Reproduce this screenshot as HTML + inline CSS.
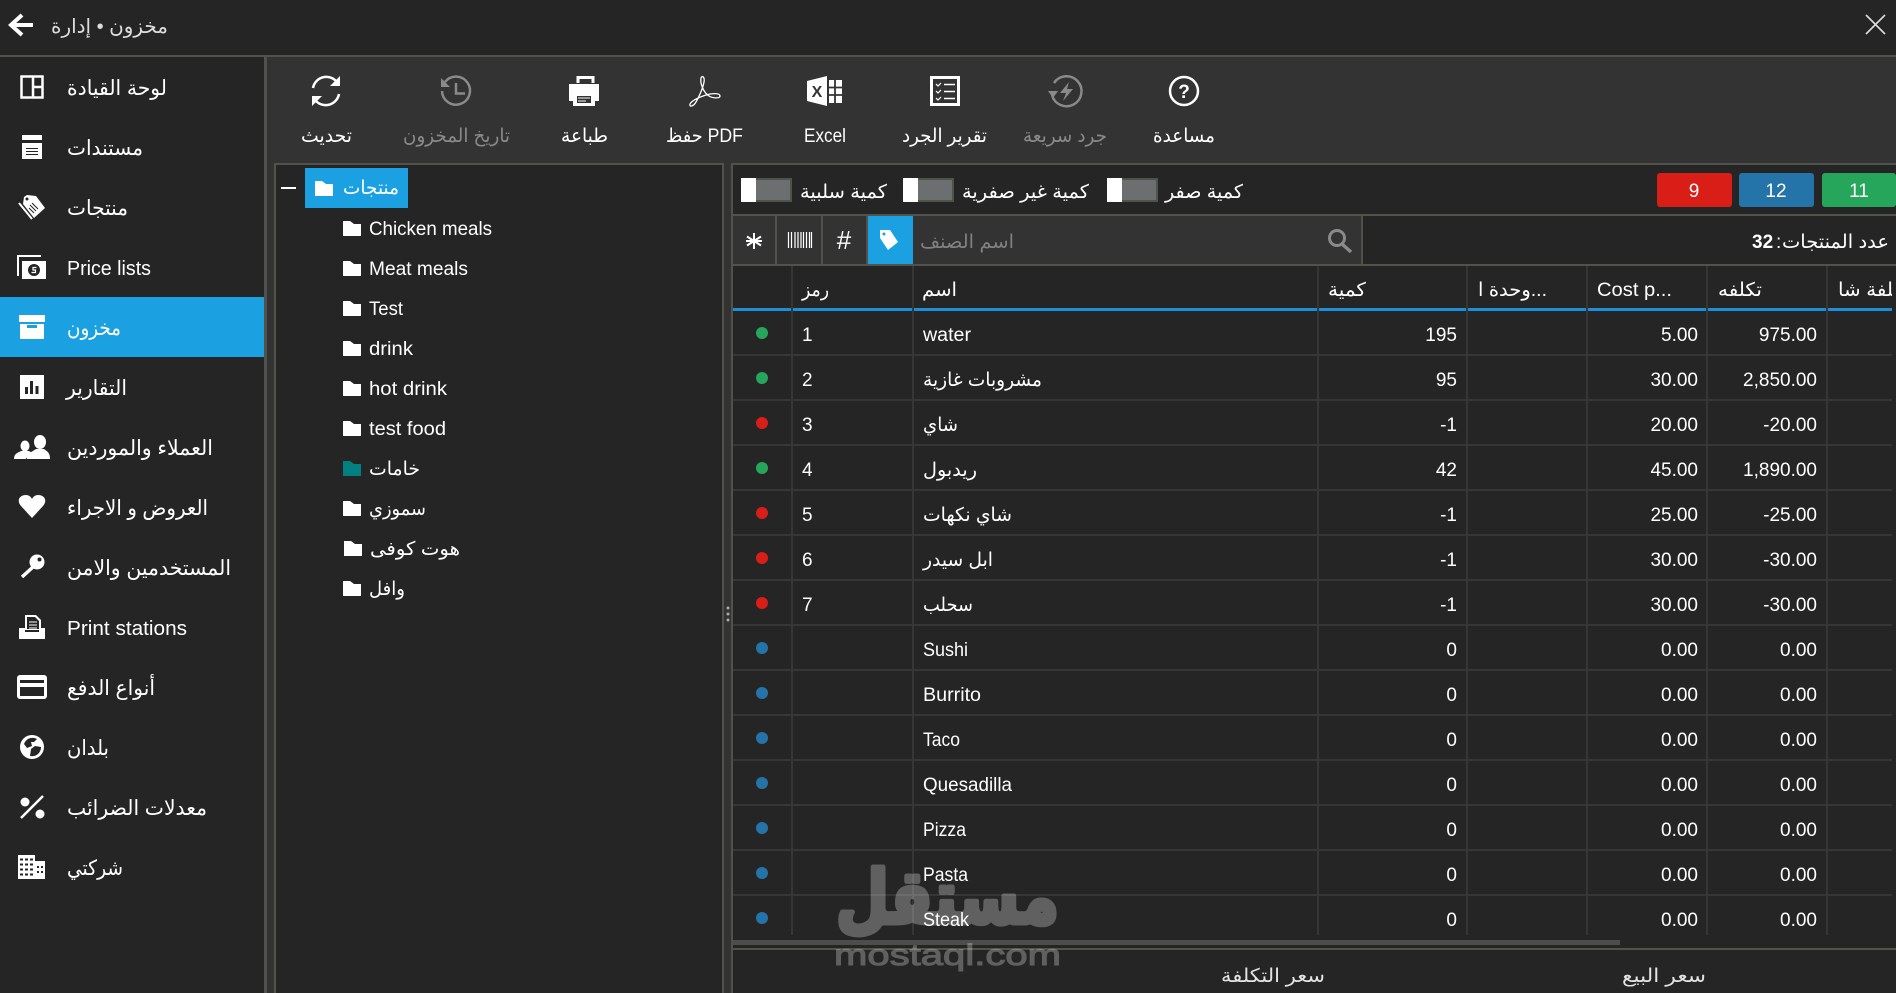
<!DOCTYPE html>
<html lang="ar"><head><meta charset="utf-8"><title>مخزون</title>
<style>
html,body{margin:0;padding:0;background:#252525;overflow:hidden}
svg{display:block}
text{font-family:"Liberation Sans","DejaVu Sans",sans-serif;font-size:19px;fill:#fff;direction:ltr;unicode-bidi:normal}
.s{font-size:21px}
.g{fill:#8a8a8a}
.e{text-anchor:end}
.m{text-anchor:middle}
</style></head><body>
<svg width="1896" height="993" viewBox="0 0 1896 993" xmlns="http://www.w3.org/2000/svg">
<defs><clipPath id="lc"><rect x="1829" y="270" width="63" height="36"/></clipPath></defs>
<rect width="1896" height="993" fill="#252525"/>
<!-- main backgrounds -->
<rect x="267" y="57" width="1629" height="936" fill="#333"/>
<rect x="733" y="165" width="1163" height="828" fill="#252525"/>
<rect x="276" y="165" width="446" height="828" fill="#252525"/>
<rect y="55" width="1896" height="2" fill="#50534c"/>
<rect x="264" y="57" width="3" height="936" fill="#50534c"/>
<rect x="274" y="163" width="450" height="2" fill="#50534c"/>
<rect x="274" y="163" width="2" height="830" fill="#50534c"/>
<rect x="722" y="163" width="2" height="830" fill="#50534c"/>
<rect x="731" y="163" width="1165" height="2" fill="#50534c"/>
<rect x="731" y="163" width="2" height="830" fill="#50534c"/>
<!-- title bar -->
<path d="M33 25H12M22 15L11 25L22 35" fill="none" stroke="#fff" stroke-width="4"/>
<text x="51" y="33" textLength="117" lengthAdjust="spacingAndGlyphs" style="fill:#ddd;font-size:20px">مخزون • إدارة</text>
<path d="M1866 15L1885 34M1885 15L1866 34" stroke="#ddd" stroke-width="1.6"/>
<!-- sidebar -->
<rect y="297" width="264" height="60" fill="#1ba1e2"/>
<text class="s" x="67" y="95" textLength="100" lengthAdjust="spacingAndGlyphs">لوحة القيادة</text>
<text class="s" x="67" y="155" textLength="76" lengthAdjust="spacingAndGlyphs">مستندات</text>
<text class="s" x="67" y="215" textLength="61" lengthAdjust="spacingAndGlyphs">منتجات</text>
<text x="67" y="275" textLength="84" lengthAdjust="spacingAndGlyphs" style="font-size:20px">Price lists</text>
<text class="s" x="67" y="335" textLength="54" lengthAdjust="spacingAndGlyphs">مخزون</text>
<text class="s" x="66" y="395" textLength="61" lengthAdjust="spacingAndGlyphs">التقارير</text>
<text class="s" x="67" y="455" textLength="146" lengthAdjust="spacingAndGlyphs">العملاء والموردين</text>
<text class="s" x="67" y="515" textLength="141" lengthAdjust="spacingAndGlyphs">العروض و الاجراء</text>
<text class="s" x="67" y="575" textLength="164" lengthAdjust="spacingAndGlyphs">المستخدمين والامن</text>
<text x="67" y="635" textLength="120" lengthAdjust="spacingAndGlyphs" style="font-size:20px">Print stations</text>
<text class="s" x="67" y="695" textLength="88" lengthAdjust="spacingAndGlyphs">أنواع الدفع</text>
<text class="s" x="67" y="755" textLength="42" lengthAdjust="spacingAndGlyphs">بلدان</text>
<text class="s" x="67" y="815" textLength="140" lengthAdjust="spacingAndGlyphs">معدلات الضرائب</text>
<text class="s" x="67" y="875" textLength="56" lengthAdjust="spacingAndGlyphs">شركتي</text>
<!-- sidebar icons -->
<path d="M21.5 76.5H42.5V97.5H21.5ZM33 76.5V97.5M33 87H42.5" fill="none" stroke="#fff" stroke-width="2.5"/>
<path d="M22 135H42V140H22ZM22 143H42V159H22Z" fill="#fff"/><path d="M26 148.5H38M26 151.5H38M26 154.5H38" stroke="#252525"/>
<path d="M27 195L36 196L45 208L34 218L23 204L24 197Z" fill="#fff"/><path d="M19 203L32 219" stroke="#fff" stroke-width="2"/><path d="M32 203L38 209M30 205L36 211M29 208L34 213" stroke="#252525"/><circle cx="27" cy="199" r="1.5" fill="#252525"/>
<path d="M41 256H18V276" fill="none" stroke="#fff" stroke-width="2"/><rect x="22" y="261" width="24" height="18" fill="#fff"/><circle cx="34" cy="270" r="6" fill="#252525"/><path d="M36.5 267.5H33V270H35.5V272.5H31.5" fill="none" stroke="#fff" stroke-width="1.2"/>
<rect x="19" y="315" width="26" height="7" fill="#fff"/><rect x="20" y="324" width="24" height="15" fill="#fff"/><rect x="27" y="325" width="10" height="3" fill="#1ba1e2"/>
<rect x="20" y="375" width="24" height="24" fill="#fff"/><path d="M26.5 387V394M31.5 381V394M37 386V394" stroke="#252525" stroke-width="3"/>
<ellipse cx="40" cy="442" rx="6" ry="7" fill="#fff"/><path d="M27 459C27 453 32 452 36 449L44 449C48 452 50 453 50 459Z" fill="#fff"/><ellipse cx="25" cy="446" rx="4.5" ry="5.5" fill="#fff"/><path d="M14 459C14 454 17 453 21 451H29C31 452 32 453 32 454C29 455 27 457 26 459Z" fill="#fff"/>
<path d="M32 518L21 506C16 500 20 495 26 495C29 495 31 497 32 499C33 497 35 495 38 495C44 495 48 500 43 506Z" fill="#fff"/>
<circle cx="37" cy="562" r="7.5" fill="#fff"/><circle cx="39.500" cy="559.500" r="2" fill="#252525"/><path d="M33 567L22 577" stroke="#fff" stroke-width="3.500"/>
<path d="M19 628H25V632H39V628H45V639H19Z" fill="#fff"/><path d="M25 630V615H36L41 620V630Z" fill="#fff"/><path d="M27 629V617H35L39 621V629Z" fill="#252525"/><path d="M29 622H37M29 625H37M29 628H37" stroke="#fff"/>
<rect x="17" y="675" width="30" height="24" rx="3" fill="#fff"/><rect x="20" y="680" width="24" height="3" fill="#252525"/><rect x="20" y="687" width="24" height="9" fill="#252525"/>
<circle cx="32" cy="747" r="12" fill="#fff"/><path d="M24 744A9 9 0 0 1 37 739L34 742H31L32 746L27 748Z M30 756A9 9 0 0 0 41 747L35 746L31 749Z" fill="#252525"/>
<circle cx="25" cy="802" r="4.500" fill="#fff"/><circle cx="40" cy="814" r="4.500" fill="#fff"/><path d="M43 796L21 818" stroke="#fff" stroke-width="2.500"/>
<path d="M18 855H35V861H45V879H18Z" fill="#fff"/><path d="M20 859.500H34M20 864.500H34M20 869.500H34M20 874.500H34" stroke="#252525" stroke-width="2" stroke-dasharray="3 2"/><path d="M38 866V876M42 866V876" stroke="#252525" stroke-width="2" stroke-dasharray="2 3"/>
<!-- toolbar icons -->
<path d="M313 88A13.500 13.500 0 0 1 336 81M339 94A13.500 13.500 0 0 1 316 101" fill="none" stroke="#fff" stroke-width="2.500"/><path d="M340 76V86H330Z M312 106V96H322Z" fill="#fff"/>
<path d="M445 82A14 14 0 1 1 442 91" fill="none" stroke="#8a8a8a" stroke-width="2.500"/><path d="M441 78L450 87H441Z" fill="#8a8a8a"/><path d="M456 83V93.500H465" fill="none" stroke="#8a8a8a" stroke-width="2.500"/>
<path d="M578 83V77.500H593V83" fill="none" stroke="#fff" stroke-width="3"/><path d="M569 84H599V101H595V93H573V101H569Z" fill="#fff"/><rect x="573" y="93" width="22" height="13" fill="#fff"/><rect x="577" y="96" width="14" height="7" fill="#333"/><path d="M578 98H590M578 101H586" stroke="#fff"/>
<path d="M690 104C689 107 693 107 696 102C699 97 703 88 704 82C705 77 702 75 701 78C700 83 703 92 709 96C712 98 720 99 720 96C720 93 712 93 706 95C700 97 692 100 690 104Z" fill="none" stroke="#fff" stroke-width="1.300"/>
<path d="M807 81L827 76V106L807 101Z" fill="#fff"/><text x="817" y="97" class="m" style="font-size:16px;font-weight:bold;fill:#333">X</text><path d="M829 80H842V103H829Z" fill="#fff"/><path d="M829 87.500H842M829 95H842M835 80V103" stroke="#333" stroke-width="1.800"/>
<rect x="931.500" y="77.500" width="27" height="27" fill="none" stroke="#fff" stroke-width="3"/><path d="M936 84L938 86L941 83M936 91L938 93L941 90M936 98L938 100L941 97" fill="none" stroke="#fff" stroke-width="1.200"/><path d="M944 84.500H955M944 91.500H955M944 98.500H955" stroke="#fff" stroke-width="1.500"/>
<path d="M1054 83A15 15 0 1 1 1052 95" fill="none" stroke="#8a8a8a" stroke-width="2.500"/><path d="M1048 91H1058L1053 98Z" fill="#8a8a8a"/><path d="M1069 82L1060 93H1066L1063 101L1073 89H1067Z" fill="#8a8a8a"/>
<circle cx="1184" cy="91" r="14" fill="none" stroke="#fff" stroke-width="2.500"/><text x="1184" y="98" class="m" style="font-weight:bold;font-size:19px">?</text>
<!-- toolbar labels -->
<text x="301" y="142" textLength="51" lengthAdjust="spacingAndGlyphs">تحديث</text>
<text class="g" x="403" y="142" textLength="107" lengthAdjust="spacingAndGlyphs">تاريخ المخزون</text>
<text x="561" y="142" textLength="47" lengthAdjust="spacingAndGlyphs">طباعة</text>
<text x="666" y="142" textLength="77" lengthAdjust="spacingAndGlyphs">حفظ PDF</text>
<text x="804" y="142" textLength="42" lengthAdjust="spacingAndGlyphs">Excel</text>
<text x="902" y="142" textLength="85" lengthAdjust="spacingAndGlyphs">تقرير الجرد</text>
<text class="g" x="1023" y="142" textLength="84" lengthAdjust="spacingAndGlyphs">جرد سريعة</text>
<text x="1153" y="142" textLength="62" lengthAdjust="spacingAndGlyphs">مساعدة</text>
<!-- tree -->
<rect x="281" y="187" width="15" height="2" fill="#fff"/>
<rect x="305" y="168" width="103" height="40" fill="#1ba1e2"/>
<path d="M315 181H322L326 184H333V196H315Z" fill="#fff"/>
<text x="343" y="194" textLength="56" lengthAdjust="spacingAndGlyphs">منتجات</text>
<g fill="#fff">
<path d="M343 221H350L354 224H361V236H343Z"/><path d="M343 261H350L354 264H361V276H343Z"/><path d="M343 301H350L354 304H361V316H343Z"/><path d="M343 341H350L354 344H361V356H343Z"/><path d="M343 381H350L354 384H361V396H343Z"/><path d="M343 421H350L354 424H361V436H343Z"/><path d="M343 461H350L354 464H361V476H343Z" fill="#008080"/><path d="M343 501H350L354 504H361V516H343Z"/><path d="M344 541H351L355 544H362V556H344Z"/><path d="M343 581H350L354 584H361V596H343Z"/>
</g>
<text x="369" y="235" textLength="123" lengthAdjust="spacingAndGlyphs">Chicken meals</text>
<text x="369" y="275" textLength="99" lengthAdjust="spacingAndGlyphs">Meat meals</text>
<text x="369" y="315" textLength="34" lengthAdjust="spacingAndGlyphs">Test</text>
<text x="369" y="355" textLength="44" lengthAdjust="spacingAndGlyphs">drink</text>
<text x="369" y="395" textLength="78" lengthAdjust="spacingAndGlyphs">hot drink</text>
<text x="369" y="435" textLength="77" lengthAdjust="spacingAndGlyphs">test food</text>
<text x="369" y="475" textLength="51" lengthAdjust="spacingAndGlyphs">خامات</text>
<text x="369" y="515" textLength="57" lengthAdjust="spacingAndGlyphs">سموزي</text>
<text x="370" y="555" textLength="90" lengthAdjust="spacingAndGlyphs">هوت كوفى</text>
<text x="369" y="595" textLength="36" lengthAdjust="spacingAndGlyphs">وافل</text>
<!-- splitter -->
<g fill="#aaa"><circle cx="728" cy="608" r="1.500"/><circle cx="728" cy="614" r="1.500"/><circle cx="728" cy="620" r="1.500"/></g>
<!-- filter row -->
<g fill="#6d6e6f" stroke="#50534c" stroke-width="2"><rect x="743" y="179" width="48" height="22"/><rect x="904" y="179" width="49" height="22"/><rect x="1108" y="179" width="49" height="22"/></g>
<g fill="#fff"><rect x="741" y="178" width="15" height="24"/><rect x="903" y="178" width="15" height="24"/><rect x="1107" y="178" width="15" height="24"/></g>
<text x="800" y="198" textLength="87" lengthAdjust="spacingAndGlyphs">كمية سلبية</text>
<text x="962" y="198" textLength="127" lengthAdjust="spacingAndGlyphs">كمية غير صفرية</text>
<text x="1165" y="198" textLength="78" lengthAdjust="spacingAndGlyphs">كمية صفر</text>
<rect x="1657" y="173" width="75" height="34" rx="3" fill="#d91e18"/>
<rect x="1739" y="173" width="75" height="34" rx="3" fill="#2574a9"/>
<rect x="1822" y="173" width="74" height="34" rx="3" fill="#26a65b"/>
<text class="m" x="1694" y="197">9</text><text class="m" x="1776" y="197">12</text><text class="m" x="1859" y="197">11</text>
<rect x="733" y="214" width="1163" height="2" fill="#50534c"/>
<!-- search row -->
<rect x="733" y="216" width="628" height="48" fill="#333"/>
<rect x="775" y="216" width="2" height="48" fill="#50534c"/><rect x="821" y="216" width="2" height="48" fill="#50534c"/><rect x="866" y="216" width="2" height="48" fill="#50534c"/>
<rect x="868" y="216" width="45" height="48" fill="#1ba1e2"/>
<rect x="1361" y="216" width="2" height="48" fill="#50534c"/>
<rect x="733" y="264" width="1163" height="2" fill="#50534c"/>
<path d="M754 233V249M747 236.500L761 245.500M761 236.500L747 245.500M746 241H762" stroke="#fff" stroke-width="2"/>
<path d="M788.500 232V248M791.500 232V248M795 232V248M798 232V248M801 232V248M803.500 232V248M806.500 232V248M809.500 232V248M811.500 232V248" stroke="#fff" stroke-width="1.200"/>
<text class="m" x="844" y="249" style="font-size:26px">#</text>
<path d="M880 230H890L898 242L888 250L880 238Z" fill="#fff"/><circle cx="884" cy="234" r="1.500" fill="#1ba1e2"/>
<text x="920" y="248" textLength="94" lengthAdjust="spacingAndGlyphs" style="fill:#808080">اسم الصنف</text>
<circle cx="1337" cy="238" r="7.500" fill="none" stroke="#8a8a8a" stroke-width="3"/><path d="M1342 244L1351 252" stroke="#8a8a8a" stroke-width="3.500"/>
<text x="1782" y="248" textLength="107" lengthAdjust="spacingAndGlyphs">عدد المنتجات</text><text x="1776" y="248">:</text>
<text x="1752" y="248" style="font-weight:bold">32</text>
<!-- table grid -->
<g fill="#363636">
<rect x="791" y="266" width="2" height="669"/><rect x="912" y="266" width="2" height="669"/><rect x="1317" y="266" width="2" height="669"/><rect x="1466" y="266" width="2" height="669"/><rect x="1586" y="266" width="2" height="669"/><rect x="1706" y="266" width="2" height="669"/><rect x="1826" y="266" width="2" height="669"/>
<rect x="733" y="354" width="1159" height="2"/><rect x="733" y="399" width="1159" height="2"/><rect x="733" y="444" width="1159" height="2"/><rect x="733" y="489" width="1159" height="2"/><rect x="733" y="534" width="1159" height="2"/><rect x="733" y="579" width="1159" height="2"/><rect x="733" y="624" width="1159" height="2"/><rect x="733" y="669" width="1159" height="2"/><rect x="733" y="714" width="1159" height="2"/><rect x="733" y="759" width="1159" height="2"/><rect x="733" y="804" width="1159" height="2"/><rect x="733" y="849" width="1159" height="2"/><rect x="733" y="894" width="1159" height="2"/>
</g>
<g fill="#1b8fd8">
<rect x="733" y="308" width="58" height="3"/><rect x="793" y="308" width="119" height="3"/><rect x="914" y="308" width="403" height="3"/><rect x="1319" y="308" width="147" height="3"/><rect x="1468" y="308" width="118" height="3"/><rect x="1588" y="308" width="118" height="3"/><rect x="1708" y="308" width="118" height="3"/><rect x="1828" y="308" width="64" height="3"/>
</g>
<!-- header -->
<text x="802" y="296" textLength="27" lengthAdjust="spacingAndGlyphs">رمز</text>
<text x="922" y="296" textLength="35" lengthAdjust="spacingAndGlyphs">اسم</text>
<text x="1328" y="296" textLength="38" lengthAdjust="spacingAndGlyphs">كمية</text>
<text x="1478" y="296" textLength="69" lengthAdjust="spacingAndGlyphs">وحدة ا...</text>
<text x="1597" y="296" textLength="75" lengthAdjust="spacingAndGlyphs">Cost p...</text>
<text x="1718" y="296" textLength="44" lengthAdjust="spacingAndGlyphs">تكلفه</text>
<g clip-path="url(#lc)"><text x="1838" y="296" textLength="72" lengthAdjust="spacingAndGlyphs">تكلفة شا</text></g>
<!-- dots -->
<circle cx="762" cy="333" r="6" fill="#26a65b"/><circle cx="762" cy="378" r="6" fill="#26a65b"/><circle cx="762" cy="423" r="6" fill="#d91e18"/><circle cx="762" cy="468" r="6" fill="#26a65b"/><circle cx="762" cy="513" r="6" fill="#d91e18"/><circle cx="762" cy="558" r="6" fill="#d91e18"/><circle cx="762" cy="603" r="6" fill="#d91e18"/><circle cx="762" cy="648" r="6" fill="#2574a9"/><circle cx="762" cy="693" r="6" fill="#2574a9"/><circle cx="762" cy="738" r="6" fill="#2574a9"/><circle cx="762" cy="783" r="6" fill="#2574a9"/><circle cx="762" cy="828" r="6" fill="#2574a9"/><circle cx="762" cy="873" r="6" fill="#2574a9"/><circle cx="762" cy="918" r="6" fill="#2574a9"/>
<!-- rows -->
<text x="802" y="341">1</text><text x="923" y="341" textLength="48" lengthAdjust="spacingAndGlyphs">water</text><text class="e" x="1457" y="341">195</text><text class="e" x="1698" y="341">5.00</text><text class="e" x="1817" y="341">975.00</text>
<text x="802" y="386">2</text><text x="923" y="386" textLength="119" lengthAdjust="spacingAndGlyphs">مشروبات غازية</text><text class="e" x="1457" y="386">95</text><text class="e" x="1698" y="386">30.00</text><text class="e" x="1817" y="386">2,850.00</text>
<text x="802" y="431">3</text><text x="923" y="431" textLength="35" lengthAdjust="spacingAndGlyphs">شاي</text><text class="e" x="1457" y="431">-1</text><text class="e" x="1698" y="431">20.00</text><text class="e" x="1817" y="431">-20.00</text>
<text x="802" y="476">4</text><text x="923" y="476" textLength="54" lengthAdjust="spacingAndGlyphs">ريدبول</text><text class="e" x="1457" y="476">42</text><text class="e" x="1698" y="476">45.00</text><text class="e" x="1817" y="476">1,890.00</text>
<text x="802" y="521">5</text><text x="923" y="521" textLength="89" lengthAdjust="spacingAndGlyphs">شاي نكهات</text><text class="e" x="1457" y="521">-1</text><text class="e" x="1698" y="521">25.00</text><text class="e" x="1817" y="521">-25.00</text>
<text x="802" y="566">6</text><text x="923" y="566" textLength="70" lengthAdjust="spacingAndGlyphs">ابل سيدر</text><text class="e" x="1457" y="566">-1</text><text class="e" x="1698" y="566">30.00</text><text class="e" x="1817" y="566">-30.00</text>
<text x="802" y="611">7</text><text x="923" y="611" textLength="50" lengthAdjust="spacingAndGlyphs">سحلب</text><text class="e" x="1457" y="611">-1</text><text class="e" x="1698" y="611">30.00</text><text class="e" x="1817" y="611">-30.00</text>
<text x="923" y="656" textLength="45" lengthAdjust="spacingAndGlyphs">Sushi</text><text class="e" x="1457" y="656">0</text><text class="e" x="1698" y="656">0.00</text><text class="e" x="1817" y="656">0.00</text>
<text x="923" y="701" textLength="58" lengthAdjust="spacingAndGlyphs">Burrito</text><text class="e" x="1457" y="701">0</text><text class="e" x="1698" y="701">0.00</text><text class="e" x="1817" y="701">0.00</text>
<text x="923" y="746" textLength="37" lengthAdjust="spacingAndGlyphs">Taco</text><text class="e" x="1457" y="746">0</text><text class="e" x="1698" y="746">0.00</text><text class="e" x="1817" y="746">0.00</text>
<text x="923" y="791" textLength="89" lengthAdjust="spacingAndGlyphs">Quesadilla</text><text class="e" x="1457" y="791">0</text><text class="e" x="1698" y="791">0.00</text><text class="e" x="1817" y="791">0.00</text>
<text x="923" y="836" textLength="43" lengthAdjust="spacingAndGlyphs">Pizza</text><text class="e" x="1457" y="836">0</text><text class="e" x="1698" y="836">0.00</text><text class="e" x="1817" y="836">0.00</text>
<text x="923" y="881" textLength="45" lengthAdjust="spacingAndGlyphs">Pasta</text><text class="e" x="1457" y="881">0</text><text class="e" x="1698" y="881">0.00</text><text class="e" x="1817" y="881">0.00</text>
<text x="923" y="926" textLength="46" lengthAdjust="spacingAndGlyphs">Steak</text><text class="e" x="1457" y="926">0</text><text class="e" x="1698" y="926">0.00</text><text class="e" x="1817" y="926">0.00</text>
<!-- scrollbar + footer -->
<rect x="733" y="940" width="887" height="5" fill="#4d4d4d"/>
<rect x="733" y="948" width="1163" height="2" fill="#50534c"/>
<text x="1221" y="982" textLength="104" lengthAdjust="spacingAndGlyphs" style="fill:#e4e4e4">سعر التكلفة</text>
<text x="1622" y="982" textLength="84" lengthAdjust="spacingAndGlyphs" style="fill:#e4e4e4">سعر البيع</text>
<!-- watermark -->
<text x="836" y="923" textLength="223" lengthAdjust="spacingAndGlyphs" style="font-size:74px;font-weight:bold;fill:#fff;stroke:#fff;stroke-width:5;stroke-linejoin:round;opacity:.27">مستقل</text>
<text x="834" y="965" textLength="227" lengthAdjust="spacingAndGlyphs" style="font-size:30px;fill:#fff;stroke:#fff;stroke-width:1;opacity:.27">mostaql.com</text>
</svg>
</body></html>
